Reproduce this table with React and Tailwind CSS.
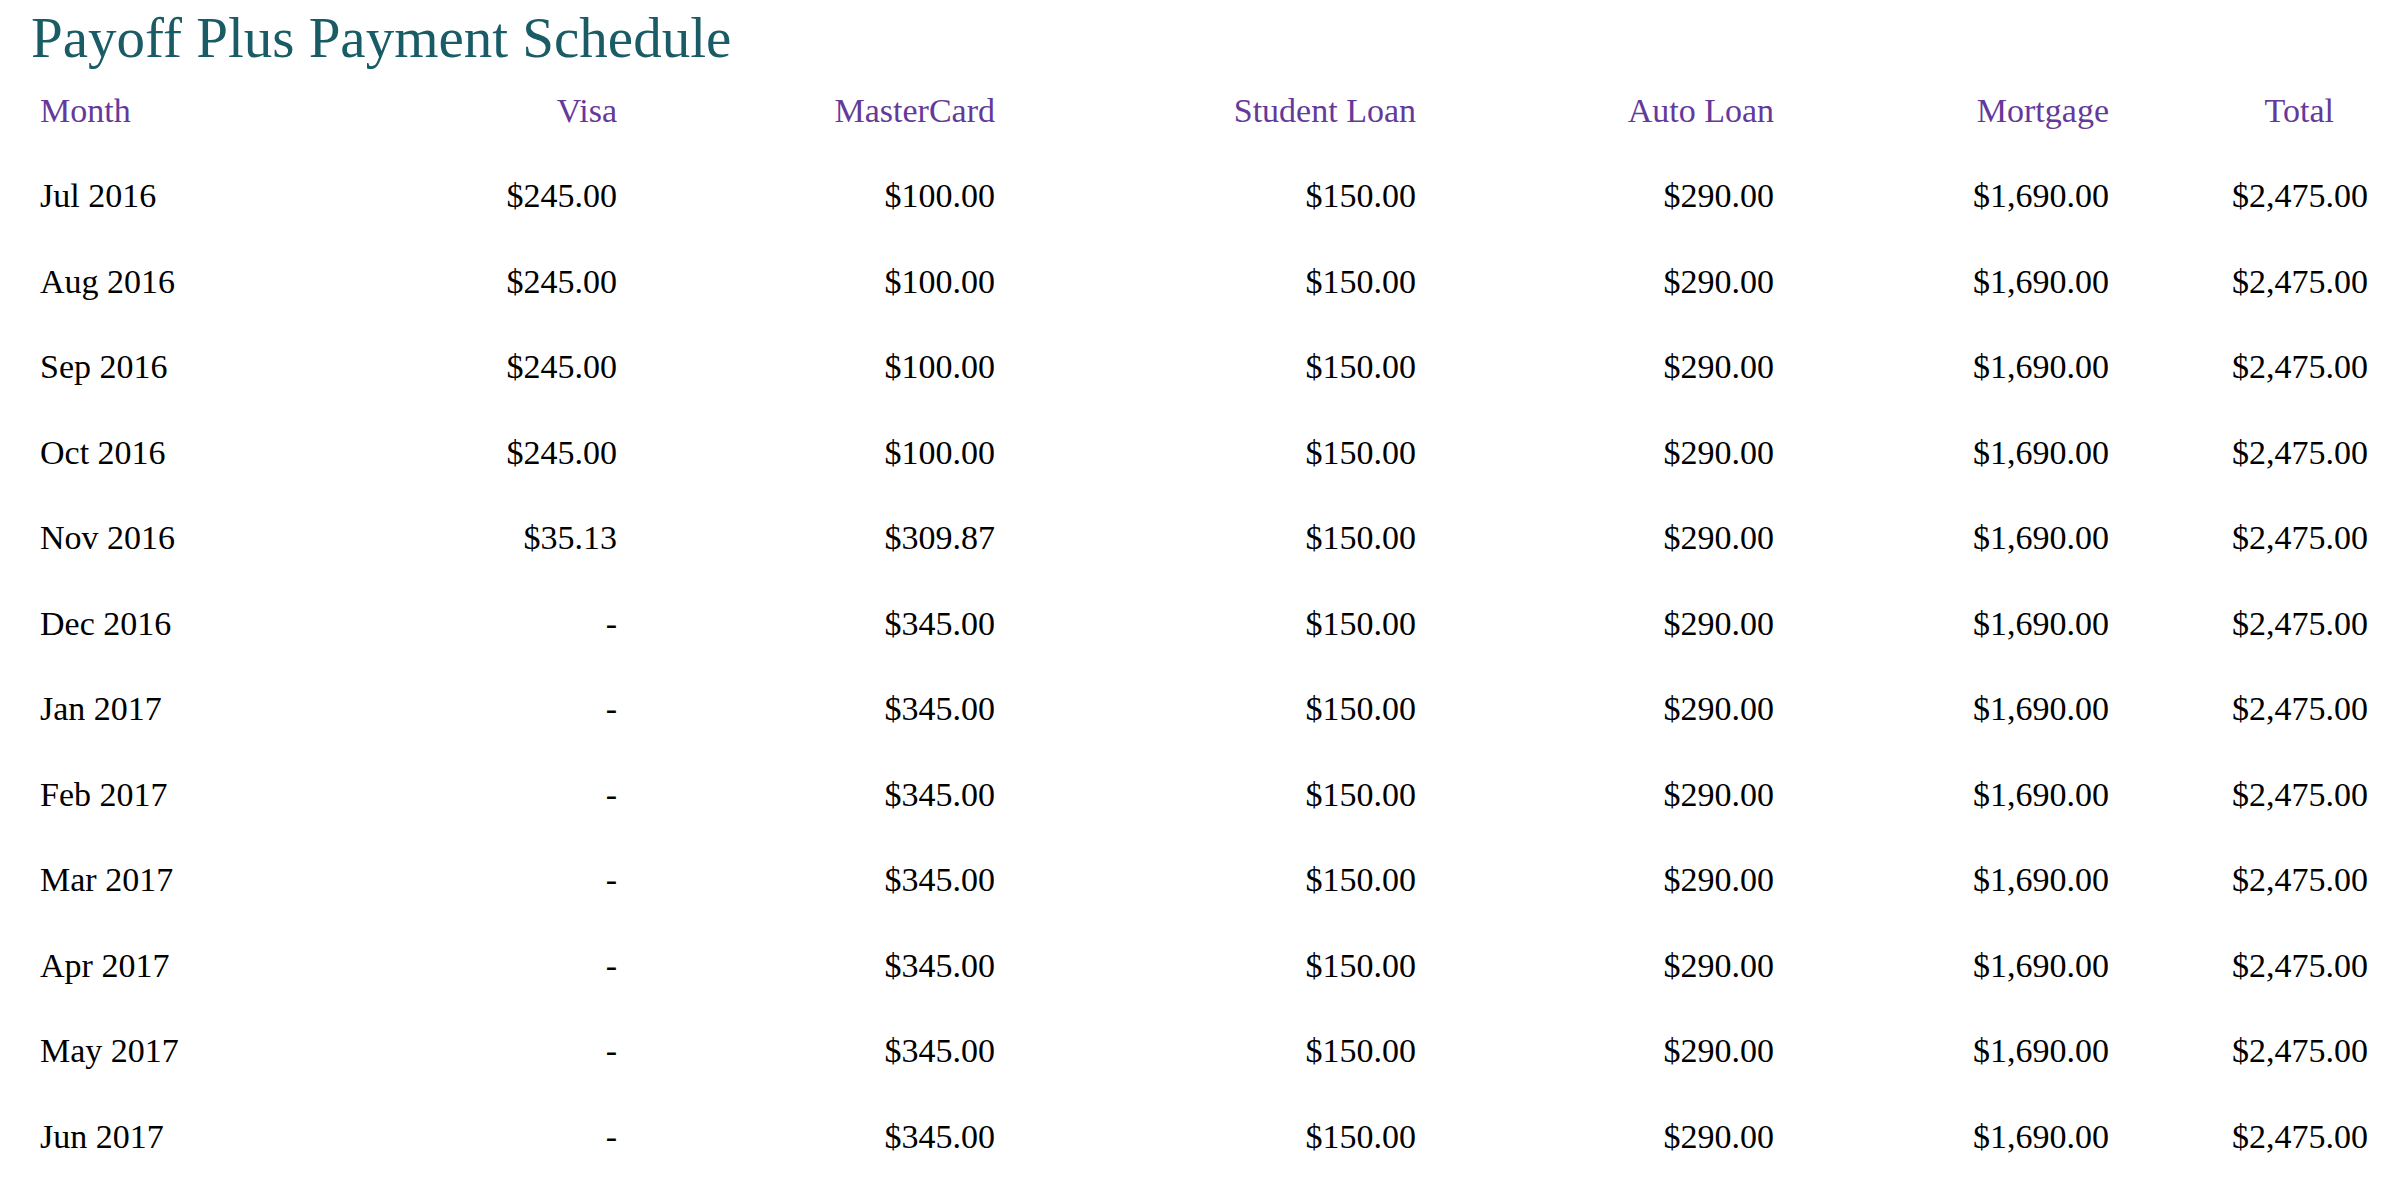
const rows = [
  ["Jul 2016", "$245.00", "$100.00"],
  ["Aug 2016", "$245.00", "$100.00"],
  ["Sep 2016", "$245.00", "$100.00"],
  ["Oct 2016", "$245.00", "$100.00"],
  ["Nov 2016", "$35.13", "$309.87"],
  ["Dec 2016", "-", "$345.00"],
  ["Jan 2017", "-", "$345.00"],
  ["Feb 2017", "-", "$345.00"],
  ["Mar 2017", "-", "$345.00"],
  ["Apr 2017", "-", "$345.00"],
  ["May 2017", "-", "$345.00"],
  ["Jun 2017", "-", "$345.00"],
];

const cols = "grid grid-cols-[360px_217px_378px_421px_358px_335px_259px] items-center";

const App = () => {
  return (
    <div className="min-h-screen bg-white pl-[31px] font-['Liberation_Serif',serif] text-black">
      <h1 className="h-[67px] pt-[8px] text-[57px] leading-[59px] text-[#1a5c66]">
        Payoff Plus Payment Schedule
      </h1>
      <div className="pl-[9px] text-[34px]">
        <div className={`${cols} h-[86px] text-[#64399a]`}>
          <div>Month</div>
          <div className="text-right">Visa</div>
          <div className="text-right">MasterCard</div>
          <div className="text-right">Student Loan</div>
          <div className="text-right">Auto Loan</div>
          <div className="text-right">Mortgage</div>
          <div className="text-right pr-[34px]">Total</div>
        </div>
        {rows.map((r) => (
          <div key={r[0]} className={`${cols} h-[85.5px]`}>
            <div>{r[0]}</div>
            <div className="text-right">{r[1]}</div>
            <div className="text-right">{r[2]}</div>
            <div className="text-right">$150.00</div>
            <div className="text-right">$290.00</div>
            <div className="text-right">$1,690.00</div>
            <div className="text-right">$2,475.00</div>
          </div>
        ))}
      </div>
    </div>
  );
};

export default App;
